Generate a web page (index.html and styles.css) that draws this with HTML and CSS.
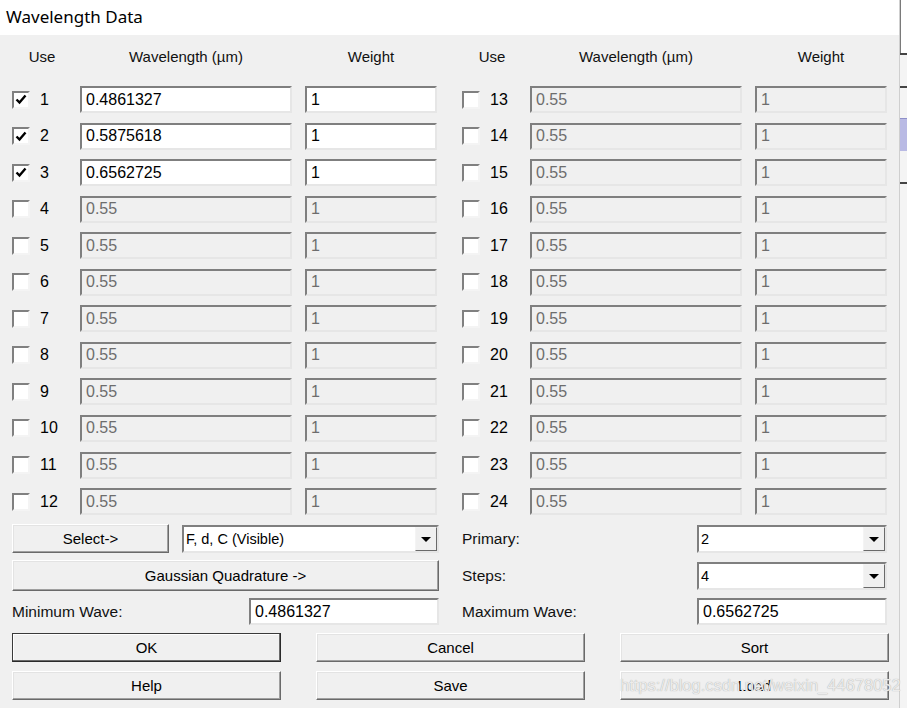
FILE: index.html
```html
<!DOCTYPE html>
<html lang="en">
<head>
    <meta charset="UTF-8">
    <title>Wavelength Data</title>
    <link rel="stylesheet" href="styles.css">
</head>
<body>
    <div class="screen">
        <div class="dialog">
            <div class="titlebar">Wavelength Data</div>
            <div class="content">
                <div class="tables">
                    <div class="panel" id="panelLeft">
                        <div class="head">
                            <span class="h-use">Use</span>
                            <span class="h-wave">Wavelength (µm)</span>
                            <span class="h-weight">Weight</span>
                        </div>
                    </div>
                    <div class="panel" id="panelRight">
                        <div class="head">
                            <span class="h-use">Use</span>
                            <span class="h-wave">Wavelength (µm)</span>
                            <span class="h-weight">Weight</span>
                        </div>
                    </div>
                </div>

                <div class="controls">
                    <div class="ctl-row">
                        <button class="btn btn-select">Select-&gt;</button>
                        <div class="combo combo-preset">
                            <span class="combo-text">F, d, C (Visible)</span>
                            <span class="combo-arrow"></span>
                        </div>
                    </div>
                    <div class="ctl-row">
                        <span class="lbl">Primary:</span>
                        <div class="combo combo-small">
                            <span class="combo-text">2</span>
                            <span class="combo-arrow"></span>
                        </div>
                    </div>
                    <div class="ctl-row">
                        <button class="btn btn-wide">Gaussian Quadrature -&gt;</button>
                    </div>
                    <div class="ctl-row">
                        <span class="lbl">Steps:</span>
                        <div class="combo combo-small">
                            <span class="combo-text">4</span>
                            <span class="combo-arrow"></span>
                        </div>
                    </div>
                    <div class="ctl-row">
                        <span class="lbl">Minimum Wave:</span>
                        <input class="field field-small" type="text" value="0.4861327">
                    </div>
                    <div class="ctl-row">
                        <span class="lbl">Maximum Wave:</span>
                        <input class="field field-small" type="text" value="0.6562725">
                    </div>
                </div>

                <div class="actions">
                    <button class="btn btn-default">OK</button>
                    <button class="btn">Cancel</button>
                    <button class="btn">Sort</button>
                    <button class="btn">Help</button>
                    <button class="btn">Save</button>
                    <button class="btn">Load</button>
                </div>
            </div>
        </div>
        <div class="side">
            <div class="side-top"></div>
            <div class="side-line"></div>
            <div class="side-gap"></div>
            <div class="side-line"></div>
            <div class="side-gap short"></div>
            <div class="side-sel"></div>
            <div class="side-gap"></div>
            <div class="side-line"></div>
        </div>
        <div class="watermark">https://blog.csdn.net/weixin_44678052</div>
    </div>

    <script>
        // wavelengths 1-3 are F, d, C; the rest are unused defaults
        const waves = [
            { use: true, wave: '0.4861327', weight: '1' },
            { use: true, wave: '0.5875618', weight: '1' },
            { use: true, wave: '0.6562725', weight: '1' }
        ];
        while (waves.length < 24) {
            waves.push({ use: false, wave: '0.55', weight: '1' });
        }

        const checkSvg = '<svg width="12" height="11" viewBox="0 0 12 11"><path d="M1.5 5.5 L4.5 8.5 L10.5 1.5" fill="none" stroke="#000" stroke-width="2.4"/></svg>';

        function buildRow(item, num) {
            const row = document.createElement('div');
            row.className = 'row';
            const dis = item.use ? '' : ' disabled';
            row.innerHTML =
                '<span class="check">' + (item.use ? checkSvg : '') + '</span>' +
                '<span class="num">' + num + '</span>' +
                '<input class="field field-wave" type="text" value="' + item.wave + '"' + dis + '>' +
                '<input class="field field-weight" type="text" value="' + item.weight + '"' + dis + '>';
            return row;
        }

        const left = document.getElementById('panelLeft');
        const right = document.getElementById('panelRight');
        waves.forEach((item, i) => {
            const panel = i < 12 ? left : right;
            panel.appendChild(buildRow(item, i + 1));
        });
    </script>
</body>
</html>
```

FILE: styles.css
```css
body {
    margin: 0;
    font-family: "Liberation Sans", Arial, sans-serif;
    color: #000;
    background-color: #f0f0f0;
}
.screen {
    position: relative;
    display: flex;
    width: 907px;
    height: 708px;
    overflow: hidden;
}
.dialog {
    width: 899px;
    height: 708px;
    display: flex;
    flex-direction: column;
    background-color: #f0f0f0;
}
.titlebar {
    height: 35px;
    background-color: #fff;
    font-family: "Noto Sans", "Liberation Sans", sans-serif;
    font-size: 17px;
    line-height: 33px;
    padding-left: 6px;
}
.content {
    padding: 0 12px;
}

/* wavelength tables */
.tables {
    display: grid;
    grid-template-columns: 425px 425px;
    column-gap: 25px;
}
.panel {
    display: flex;
    flex-direction: column;
    gap: 9.55px;
}
.head {
    display: flex;
    height: 24px;
    line-height: 24px;
    font-size: 15px;
    margin-top: 10px;
    margin-bottom: 7.5px;
    color: #111;
}
.h-use {
    width: 60px;
    text-align: center;
}
.h-wave {
    width: 212px;
    margin-left: 8px;
    text-align: center;
}
.h-weight {
    width: 132px;
    margin-left: 13px;
    text-align: center;
}
.row {
    display: flex;
    align-items: center;
    height: 27px;
}
.check {
    width: 18px;
    height: 18px;
    box-sizing: border-box;
    border: 2px solid;
    border-color: #808080 #f4f4f4 #f4f4f4 #808080;
    background-color: #fff;
    display: flex;
    align-items: center;
    justify-content: center;
}
.num {
    width: 40px;
    padding-left: 10px;
    font-size: 16px;
}

/* text fields */
.field {
    box-sizing: border-box;
    height: 27px;
    margin: 0;
    padding: 0 4px;
    border: 2px solid;
    border-color: #7f7f7f #e6e6e6 #e6e6e6 #7f7f7f;
    background-color: #fff;
    font-family: "Liberation Sans", Arial, sans-serif;
    font-size: 16px;
    color: #000;
    outline: none;
}
.field:disabled {
    background-color: #f0f0f0;
    color: #6d6d6d;
}
.field-wave {
    width: 212px;
}
.field-weight {
    width: 132px;
    margin-left: 13px;
}
.field-small {
    width: 190px;
}

/* controls under the tables */
.controls {
    display: grid;
    grid-template-columns: 427px 425px;
    grid-template-rows: 29px 31px 27px;
    column-gap: 23px;
    row-gap: 7px;
    margin-top: 9px;
}
.ctl-row {
    display: flex;
    align-items: center;
    justify-content: space-between;
}
.lbl {
    font-size: 15.5px;
    color: #111;
}
.btn {
    box-sizing: border-box;
    height: 29px;
    margin: 0;
    padding: 0;
    border: 1px solid;
    border-color: #fff #6a6a6a #6a6a6a #fff;
    box-shadow: inset -1px -1px 0 #a0a0a0, inset 1px 1px 0 #e3e3e3;
    background-color: #f0f0f0;
    font-family: "Liberation Sans", Arial, sans-serif;
    font-size: 15px;
    color: #000;
}
.btn-select {
    width: 157px;
}
.btn-wide {
    width: 427px;
    height: 31px;
}
.btn-default {
    border-color: #3a3a3a #2a2a2a #2a2a2a #3a3a3a;
    box-shadow: inset -1px -1px 0 #6a6a6a, inset 1px 1px 0 #fff;
}
.combo {
    box-sizing: border-box;
    height: 28px;
    display: flex;
    align-items: center;
    border: 2px solid;
    border-color: #7f7f7f #e6e6e6 #e6e6e6 #7f7f7f;
    background-color: #fff;
}
.combo-preset {
    width: 257px;
}
.combo-small {
    width: 190px;
}
.combo-text {
    flex: 1;
    padding-left: 2px;
    font-size: 14.5px;
}
.combo-arrow {
    box-sizing: border-box;
    width: 22px;
    height: 24px;
    border: 1px solid;
    border-color: #f4f4f4 #6a6a6a #6a6a6a #f4f4f4;
    background-color: #f0f0f0;
    position: relative;
}
.combo-arrow::after {
    content: "";
    position: absolute;
    left: 5px;
    top: 9px;
    border-left: 5px solid transparent;
    border-right: 5px solid transparent;
    border-top: 5px solid #000;
}

/* OK / Cancel / ... */
.actions {
    display: grid;
    grid-template-columns: 269px 269px 269px;
    column-gap: 35px;
    row-gap: 9px;
    margin-top: 8px;
}

/* strip of the window behind */
.side {
    width: 8px;
    display: flex;
    flex-direction: column;
    background-color: #f4f4f4;
    border-left: 1px solid #cfcfcf;
}
.side-top {
    height: 53px;
    border-left: 1px solid #7a7a7a;
    background-color: #fff;
}
.side-line {
    height: 2px;
    background-color: #444;
}
.side-gap {
    height: 31px;
}
.side-gap.short {
    height: 30px;
}
.side-sel {
    height: 32px;
    background-color: #b9bae4;
    border-top: 1px solid #8e8fc8;
}
.watermark {
    position: absolute;
    left: 620px;
    top: 676px;
    font-size: 16.5px;
    color: #ececec;
    text-shadow: 0 0 1px #9c9c9c;
    white-space: nowrap;
}
```
